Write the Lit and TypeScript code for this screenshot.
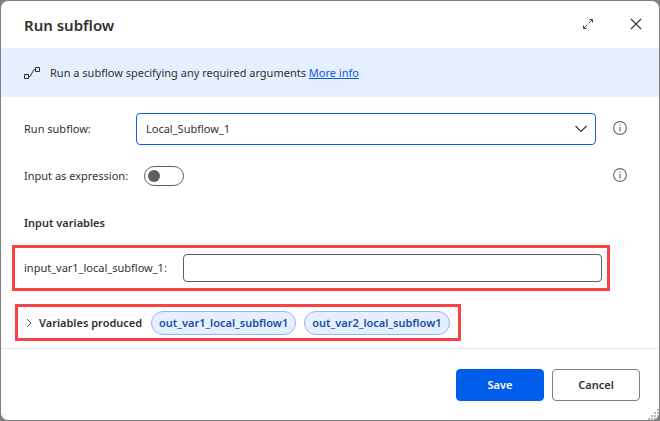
import { LitElement, html, css, svg } from "lit";
import { customElement, property, state } from "lit/decorators.js";

@customElement("info-button")
class InfoButton extends LitElement {
  @property() label = "";

  static styles = css`
    :host {
      display: block;
      padding-bottom: 2px;
    }
    .info {
      display: block;
      padding: 0;
      border: 0;
      background: none;
      color: #6b6b6b;
    }
    .icon {
      display: block;
    }
  `;

  render() {
    return html`<button class="info" type="button" aria-label=${this.label}>
      <svg class="icon" width="14" height="14" viewBox="0 0 14 14" fill="none" stroke="currentColor">
        <circle cx="7" cy="7" r="6.4" stroke-width="1.1" />
        <path d="M7 6v4.5M7 3.5v1.2" stroke-width="1.2" />
      </svg>
    </button>`;
  }
}

@customElement("app-root")
class AppRoot extends LitElement {
  @state() private outputs = ["out_var1_local_subflow1", "out_var2_local_subflow1"];

  static styles = css`
    :host {
      display: block;
      background: #808080;
      font: 11px/18px "Segoe UI", "Noto Sans", "Open Sans", sans-serif;
      color: #323130;
    }
    * {
      box-sizing: border-box;
    }
    button,
    input,
    select {
      font: inherit;
      color: inherit;
      margin: 0;
    }
    svg {
      display: block;
      flex: none;
    }
    .dialog {
      position: relative;
      display: flex;
      flex-direction: column;
      min-height: 100vh;
      border: 1px solid #808080;
      border-radius: 8px;
      background: #fff;
      overflow: hidden;
    }
    .header {
      display: flex;
      align-items: center;
      height: 47px;
      padding: 0 11px 0 23px;
    }
    .title {
      flex: 1;
      margin: 0;
      font-size: 15px;
      line-height: 24px;
      font-weight: 600;
    }
    .tools {
      display: flex;
      gap: 24px;
      padding-bottom: 1px;
    }
    .tool {
      display: grid;
      place-items: center;
      width: 24px;
      height: 24px;
      padding: 0;
      border: 0;
      background: none;
    }
    .banner {
      display: flex;
      align-items: center;
      gap: 10px;
      height: 49px;
      padding: 0 23px;
      background: #e5efff;
    }
    .banner p {
      margin: 0;
    }
    .link {
      color: #0b5be6;
    }
    .body {
      flex: 1;
      padding: 16px 0 7px;
    }
    .row {
      display: flex;
      align-items: center;
      padding: 0 32px 0 23px;
    }
    .toggle-row {
      margin: 21px 0 28px;
      height: 20px;
    }
    .name {
      width: 112px;
      white-space: nowrap;
    }
    .picker {
      position: relative;
      flex: 1;
      margin-right: 17px;
    }
    .select {
      display: block;
      width: 100%;
      height: 32px;
      padding: 0 32px 0 9px;
      border: 1px solid #0b5fe6;
      border-radius: 4px;
      background: #fff;
      appearance: none;
      outline: 0;
    }
    .chevron {
      position: absolute;
      right: 9px;
      top: 12px;
      pointer-events: none;
    }
    .switch {
      appearance: none;
      display: flex;
      align-items: center;
      width: 40px;
      height: 20px;
      margin: 0 auto 0 8px;
      padding: 0 3px;
      border: 1px solid #605e5c;
      border-radius: 10px;
    }
    .switch::before {
      content: "";
      width: 12px;
      height: 12px;
      border-radius: 50%;
      background: #605e5c;
    }
    .switch:checked {
      justify-content: flex-end;
    }
    .section {
      margin: 0 23px 13px;
      font-size: 11px;
      line-height: 18px;
      font-weight: 600;
    }
    .marked {
      display: flex;
      align-items: center;
      border: 3px solid #fb4141;
    }
    .marked-input {
      height: 46px;
      margin: 0 49px 13px 11px;
      padding: 0 5px 0 9px;
      gap: 14px;
    }
    .variable {
      min-width: 145px;
    }
    .text {
      flex: 1;
      min-width: 0;
      height: 28px;
      padding: 0 8px;
      border: 1px solid #605e5c;
      border-radius: 4px;
      background: #fff;
    }
    .marked-output {
      width: fit-content;
      height: 37px;
      margin-left: 14px;
      padding: 0 8px;
      gap: 8px;
    }
    .expander {
      display: flex;
      align-items: center;
      gap: 7px;
      min-width: 117px;
      padding: 0;
      border: 0;
      background: none;
      font-weight: 600;
    }
    .chip {
      min-width: 145px;
      height: 24px;
      padding: 0 7px;
      border: 1px solid #8ab6fb;
      border-radius: 12px;
      background: #e5efff;
      color: #174ea6;
      font-weight: 600;
    }
    .footer {
      display: flex;
      justify-content: flex-end;
      gap: 8px;
      padding: 20px 19px 19px;
      border-top: 1px solid #e8e8e8;
    }
    .action {
      width: 88px;
      height: 32px;
      padding: 0;
      border: 1px solid #808080;
      border-radius: 4px;
      background: #fff;
      font-weight: 600;
    }
    .primary {
      border-color: #005ceb;
      background: #005ceb;
      color: #fff;
    }
    .grip {
      position: absolute;
      right: 0;
      bottom: 0;
    }
  `;

  render() {
    const dots = [
      [9, 0],
      [6, 3], [9, 3],
      [3, 6], [6, 6], [9, 6],
      [0, 9], [3, 9], [6, 9], [9, 9],
    ];
    return html`
      <div class="dialog" role="dialog" aria-labelledby="title">
        <header class="header">
          <h1 class="title" id="title">Run subflow</h1>
          <div class="tools">
            <button class="tool" type="button" aria-label="Expand">
              <svg width="10" height="10" viewBox="0 0 10 10" fill="none" stroke="#484644">
                <path d="M6.5 .5h3V3.5M9.5.5L5.8 4.2M.5 6.5v3H3.5M.5 9.5L4.2 5.8" />
              </svg>
            </button>
            <button class="tool" type="button" aria-label="Close">
              <svg width="12" height="12" viewBox="0 0 12 12" fill="none" stroke="#323130">
                <path d="M1 1l10 10M11 1L1 11" stroke-width="1.1" />
              </svg>
            </button>
          </div>
        </header>
        <div class="banner">
          <svg width="16" height="12" viewBox="0 0 16 12" fill="none" stroke="#323130">
            <path d="M.5 7.5h4v4h-4zM11.5.5h4v4h-4zM4.5 9.5H6L10 2.5h1.5" />
          </svg>
          <p>Run a subflow specifying any required arguments <a class="link" href="#">More info</a></p>
        </div>
        <main class="body">
          <div class="row">
            <label class="name" for="subflow">Run subflow:</label>
            <div class="picker">
              <select class="select" id="subflow">
                <option>Local_Subflow_1</option>
              </select>
              <svg class="chevron" width="12" height="8" viewBox="0 0 12 8" fill="none" stroke="#323130">
                <path d="M.5 1L6 6.5 11.5 1" stroke-width="1.1" />
              </svg>
            </div>
            <info-button label="About Run subflow"></info-button>
          </div>
          <div class="row toggle-row">
            <label class="name" for="expression">Input as expression:</label>
            <input class="switch" id="expression" type="checkbox" role="switch" />
            <info-button label="About Input as expression"></info-button>
          </div>
          <h2 class="section">Input variables</h2>
          <div class="marked marked-input">
            <label class="variable" for="var1">input_var1_local_subflow_1:</label>
            <input class="text" id="var1" type="text" />
          </div>
          <div class="marked marked-output">
            <button class="expander" type="button" aria-expanded="false">
              <svg width="6" height="10" viewBox="0 0 6 10" fill="none" stroke="#605e5c">
                <path d="M1 1l4 4-4 4" />
              </svg>
              Variables produced
            </button>
            ${this.outputs.map((name) => html`<button class="chip" type="button">${name}</button>`)}
          </div>
        </main>
        <footer class="footer">
          <button class="action primary" type="button">Save</button>
          <button class="action" type="button">Cancel</button>
        </footer>
        <svg class="grip" width="11" height="11" viewBox="0 0 11 11" fill="#b4b9c6">
          ${dots.map(([x, y]) => svg`<rect x=${x} y=${y} width="2" height="2" />`)}
        </svg>
      </div>
    `;
  }
}
